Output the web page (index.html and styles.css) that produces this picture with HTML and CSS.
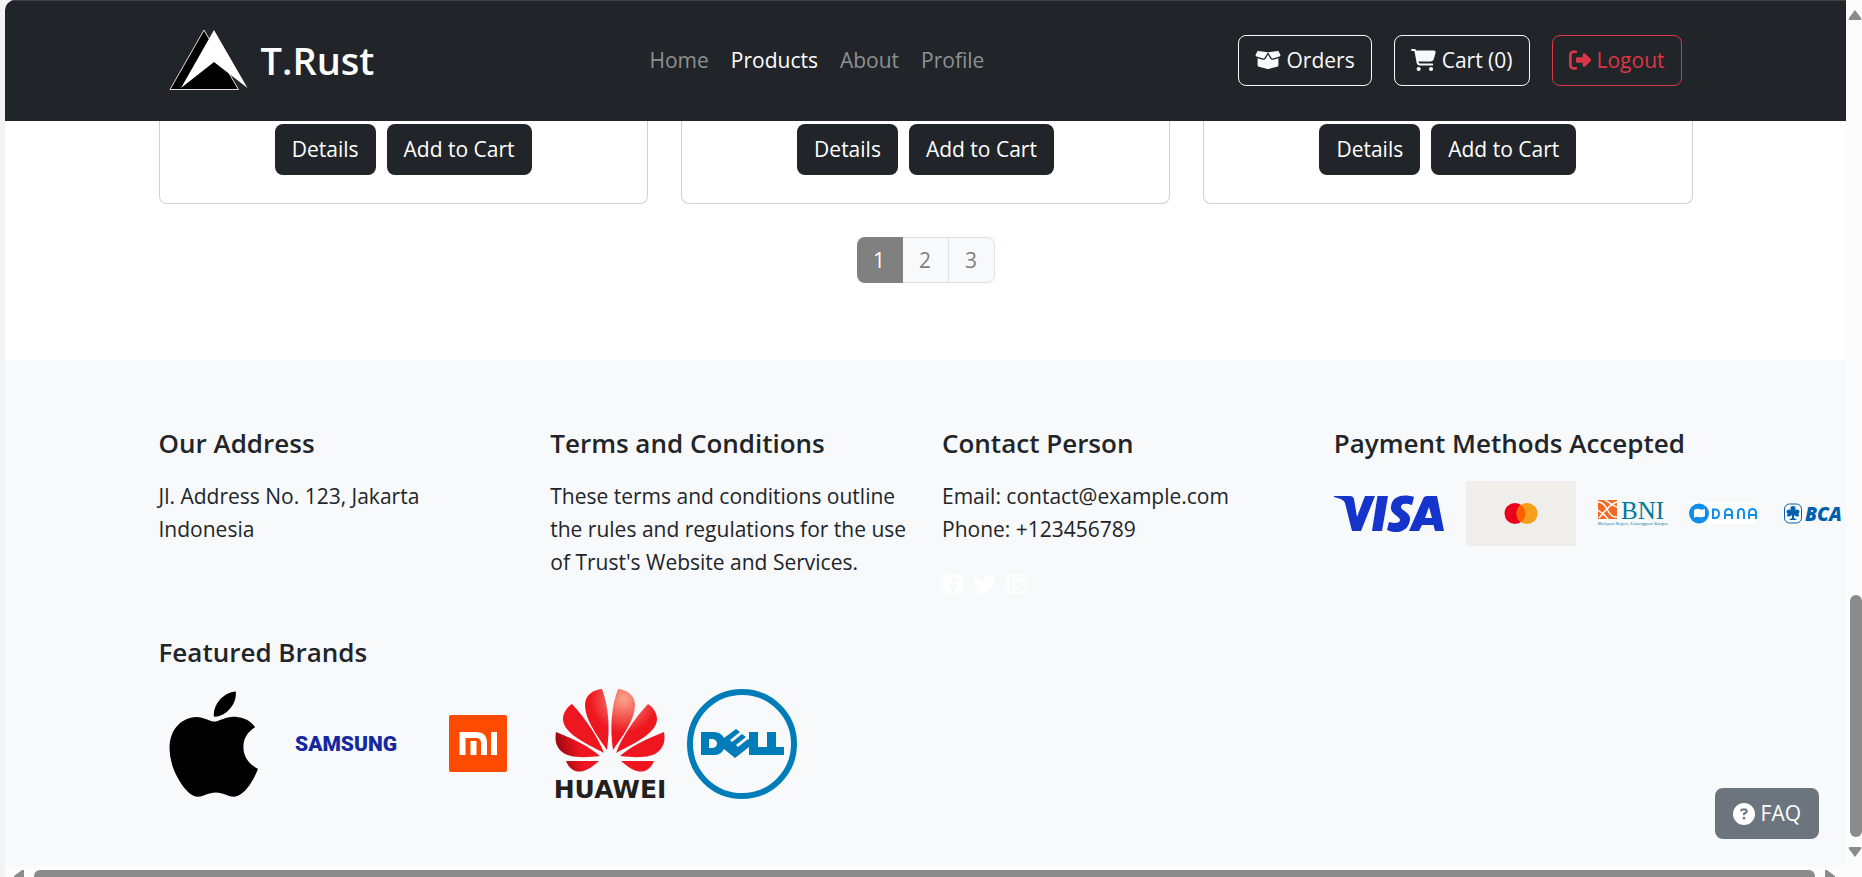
FILE: index.html
```html
<!DOCTYPE html>
<html lang="en">
<head>
<meta charset="utf-8">
<title>T.Rust - Products</title>
<link rel="stylesheet" href="styles.css">
</head>
<body>
<div class="window">
  <div class="page">
    <header class="navbar">
      <div class="container navbar-inner">
        <a class="brand" href="#">
          <svg class="brand-mark" viewBox="0 0 80 62" aria-hidden="true">
            <path d="M35 1 69.500 60.500H1Z" fill="#000" stroke="#ddd" stroke-width="1"/>
            <path d="M45 1 78.500 59 45 33 12 59Z" fill="#fff"/>
          </svg>
          <span>T.Rust</span>
        </a>
        <nav class="menu">
          <a href="#">Home</a>
          <a class="active" href="#">Products</a>
          <a href="#">About</a>
          <a href="#">Profile</a>
        </nav>
        <div class="actions">
          <button class="btn btn-outline"><svg class="icon icon-wide" viewBox="0 0 640 512"><path d="M58.900 42.100c3-6.100 9.600-9.600 16.300-8.700L320 64 564.800 33.400c6.700-.8 13.300 2.700 16.300 8.700l41.700 83.400c9 17.900-.6 39.600-19.800 45.100L439.600 217.300c-13.900 4-28.800-1.900-36.200-14.300L320 64 236.600 203c-7.400 12.400-22.300 18.300-36.200 14.300L37.100 170.600c-19.300-5.500-28.800-27.200-19.800-45.100L58.900 42.100zM321.100 128l54.900 91.400c14.900 24.800 44.600 36.600 72.500 28.600L576 211.600v167c0 22-15 41.200-36.400 46.600l-204.100 51c-10.200 2.600-20.900 2.600-31 0l-204.100-51C79 419.700 64 400.500 64 378.500v-167L191.600 248c27.800 8 57.600-3.800 72.500-28.600L318.900 128h2.200z"/></svg>Orders</button>
          <button class="btn btn-outline"><svg class="icon icon-cart" viewBox="0 0 576 512"><path d="M0 24C0 10.700 10.700 0 24 0H69.500c22 0 41.500 12.800 50.600 32h411c26.300 0 45.500 25 38.600 50.400l-41 152.300c-8.500 31.400-37 53.300-69.500 53.300H170.700l5.400 28.500c2.200 11.300 12.100 19.500 23.600 19.500H488c13.300 0 24 10.700 24 24s-10.700 24-24 24H199.700c-34.600 0-64.300-24.600-70.700-58.500L77.400 54.500c-.7-3.800-4-6.500-7.900-6.500H24C10.700 48 0 37.300 0 24zM128 464a48 48 0 1 1 96 0 48 48 0 1 1 -96 0zm336-48a48 48 0 1 1 0 96 48 48 0 1 1 0-96z"/></svg>Cart (0)</button>
          <button class="btn btn-danger"><svg class="icon" viewBox="0 0 512 512"><path d="M377.900 105.900L500.700 228.700c7.200 7.200 11.300 17.100 11.300 27.300s-4.100 20.100-11.300 27.300L377.900 406.100c-6.400 6.400-15 9.900-24 9.900c-18.700 0-33.900-15.200-33.900-33.900l0-62.100-128 0c-17.700 0-32-14.300-32-32l0-64c0-17.700 14.300-32 32-32l128 0 0-62.100c0-18.700 15.200-33.900 33.900-33.900c9 0 17.600 3.600 24 9.900zM160 96L96 96c-17.700 0-32 14.300-32 32l0 256c0 17.700 14.300 32 32 32l64 0c17.700 0 32 14.300 32 32s-14.300 32-32 32l-64 0c-53 0-96-43-96-96L0 128C0 75 43 32 96 32l64 0c17.700 0 32 14.300 32 32s-14.300 32-32 32z"/></svg>Logout</button>
        </div>
      </div>
    </header>

    <main class="container products">
      <div class="cards">
        <article class="card"><button class="btn btn-dark">Details</button><button class="btn btn-dark">Add to Cart</button></article>
        <article class="card"><button class="btn btn-dark">Details</button><button class="btn btn-dark">Add to Cart</button></article>
        <article class="card"><button class="btn btn-dark">Details</button><button class="btn btn-dark">Add to Cart</button></article>
      </div>
      <nav class="pagination" aria-label="Pages">
        <a class="current" href="#">1</a>
        <a href="#">2</a>
        <a href="#">3</a>
      </nav>
    </main>

    <footer class="footer">
      <div class="container">
        <div class="columns">
          <section>
            <h5>Our Address</h5>
            <p>Jl. Address No. 123, Jakarta<br>Indonesia</p>
          </section>
          <section>
            <h5>Terms and Conditions</h5>
            <p>These terms and conditions outline<br>the rules and regulations for the use<br>of Trust's Website and Services.</p>
          </section>
          <section>
            <h5>Contact Person</h5>
            <p>Email: contact@example.com<br>Phone: +123456789</p>
            <div class="social">
              <a href="#" aria-label="Facebook"><svg viewBox="0 0 512 512"><path fill="#fff" d="M504 256C504 119 393 8 256 8S8 119 8 256c0 123.780 90.690 226.380 209.250 245V327.690h-63V256h63v-54.640c0-62.150 37-96.480 93.670-96.480 27.140 0 55.520 4.840 55.520 4.840v61h-31.280c-30.800 0-40.410 19.120-40.410 38.730V256h68.780l-11 71.690h-57.780V501C413.310 482.380 504 379.780 504 256z"/></svg></a>
              <a href="#" aria-label="Twitter"><svg viewBox="0 0 512 512"><path fill="#fff" d="M459.370 151.716c.325 4.548.325 9.097.325 13.645 0 138.720-105.583 298.558-298.558 298.558-59.452 0-114.680-17.219-161.137-47.106 8.447.974 16.568 1.299 25.340 1.299 49.055 0 94.213-16.568 130.274-44.832-46.132-.975-84.792-31.188-98.112-72.772 6.498.974 12.995 1.624 19.818 1.624 9.421 0 18.843-1.300 27.614-3.573-48.081-9.747-84.143-51.980-84.143-102.985v-1.299c13.969 7.797 30.214 12.670 47.431 13.319-28.264-18.843-46.781-51.005-46.781-87.391 0-19.492 5.197-37.360 14.294-52.954 51.655 63.675 129.300 105.258 216.365 109.807-1.624-7.797-2.599-15.918-2.599-24.040 0-57.828 46.782-104.934 104.934-104.934 30.213 0 57.502 12.670 76.670 33.137 23.715-4.548 46.456-13.320 66.599-25.340-7.798 24.366-24.366 44.833-46.132 57.827 21.117-2.273 41.584-8.122 60.426-16.243-14.292 20.791-32.161 39.308-52.628 54.253z"/></svg></a>
              <a href="#" aria-label="Instagram"><svg viewBox="0 0 22 22"><rect x="2" y="2" width="18" height="18" rx="5" fill="none" stroke="#fff" stroke-width="2"/><circle cx="11" cy="11" r="4" fill="none" stroke="#fff" stroke-width="2"/><circle cx="16" cy="6" r="1.200" fill="#fff"/></svg></a>
            </div>
          </section>
          <section>
            <h5>Payment Methods Accepted</h5>
            <div class="payments">
              <svg width="110" height="66" viewBox="0 0 110 66" role="img" aria-label="Visa">
                <path fill="#1434cb" d="M0 16H16Q19 16 20 19L23 37 31 16H41L27 51H18L11 23Q10 19 0 17ZM43.500 16H54L48 51H38ZM80 17 78 25C72 23 67 23 67 27C67 31 77 32 76 40C74 53 61 54 53 50L55 42C61 44 66 43 66 40C66 36 56 34 57 27C58 15 71 14 80 17ZM93 16H103L110 51H101L99.500 45H88L85 51H75L89 19Q90 16 93 16ZM95 27 91 38H98Z" fill-rule="evenodd"/>
              </svg>
              <svg width="110" height="65" viewBox="0 0 110 65" role="img" aria-label="Mastercard">
                <rect width="110" height="65" fill="#f0eeeb"/>
                <circle cx="49" cy="32.500" r="10.500" fill="#eb001b"/><circle cx="61" cy="32.500" r="10.500" fill="#f79e1b"/>
                <path d="M55 23.900a10.500 10.500 0 0 1 0 17.200a10.500 10.500 0 0 1 0-17.200Z" fill="#ff5f00"/>
              </svg>
              <svg width="69" height="26" viewBox="0 0 69 26" role="img" aria-label="BNI">
                <rect width="19" height="19" fill="#f06a25"/>
                <path d="M0 2C5 2 7 5 9 9S14 18 19 17M1 18C5 13 7 11 9 9S14 3 19 2M7 0C12 3 15 6 19 7M0 10C3 13 7 14 10 19" stroke="#fff" stroke-width="1.500" fill="none"/>
                <text x="23" y="19" class="bni">BNI</text>
                <text x="0" y="25" class="tagline">Melayani Negeri, Kebanggaan Bangsa</text>
              </svg>
              <svg width="68" height="21" viewBox="0 0 68 21" role="img" aria-label="Dana">
                <rect width="68" height="21" fill="#fff"/>
                <circle cx="10" cy="10.500" r="10" fill="#118eea"/>
                <path d="M5 7Q8 5 10 6T16 6V13Q13 15 10 14T5 15Z" fill="#fff"/>
                <path d="M24 6.500V15H26Q30 15 30 10.700T26 6.500ZM36 16V10Q36 6 39.500 6T43 10V16M36 12H43M49 16V10Q49 6 52 6T55 10V16M60 16V10Q60 6 63.500 6T67 10V16M60 12H67" fill="none" stroke="#118eea" stroke-width="2"/>
              </svg>
              <svg width="65" height="21" viewBox="0 0 65 21" role="img" aria-label="BCA">
                <rect x="5.500" y="1" width="17" height="19" rx="5" fill="none" stroke="#0060af"/>
                <path d="M14 3C17 3 17 6 16 7C20 5 22 9 19 11C22 13 19 15 15 12L15 15 18 17H10L13 15 13 12C9 15 6 13 9 11C6 9 8 5 12 7C11 6 11 3 14 3Z" fill="#0060af"/>
                <text x="26" y="18" class="bca-text">BCA</text>
              </svg>
            </div>
          </section>
        </div>

        <section class="brands-section">
          <h5>Featured Brands</h5>
          <div class="brands">
            <svg width="110" height="110" viewBox="0 0 110 110" role="img" aria-label="Apple"><path transform="translate(9.600 -5) scale(.2348)" d="M318.700 268.700c-.2-36.700 16.400-64.400 50-84.800-18.800-26.900-47.200-41.700-84.700-44.600-35.500-2.800-74.300 20.700-88.500 20.700-15 0-49.400-19.700-76.400-19.700C63.300 141.200 4 184.800 4 273.500q0 39.300 14.400 81.200c12.800 36.700 59 126.700 107.200 125.200 25.200-.6 43-17.900 75.800-17.900 31.800 0 48.300 17.900 76.400 17.900 48.600-.7 90.400-82.500 102.600-119.300-65.200-30.700-61.700-90-61.700-91.900zm-56.600-164.200c27.300-32.400 24.800-61.900 24-72.500-24.100 1.400-52 16.400-67.900 34.900-17.500 19.800-27.800 44.300-25.600 71.900 26.100 2 49.900-11.400 69.500-34.300z"/></svg>
            <svg width="110" height="110" viewBox="0 0 110 110" role="img" aria-label="Samsung"><text x="55" y="62" text-anchor="middle" class="samsung">SAMSUNG</text></svg>
            <svg width="110" height="110" viewBox="0 0 110 110" role="img" aria-label="Xiaomi">
              <rect x="26" y="26" width="58" height="57" rx="2" fill="#ff4b00"/>
              <path d="M39.500 66V46H53Q61 46 61 54V66M50.500 52V66M71 43V66" fill="none" stroke="#fff" stroke-width="6"/>
            </svg>
            <svg width="110" height="110" viewBox="0 0 110 110" role="img" aria-label="Huawei">
              <defs><radialGradient id="petal" gradientUnits="userSpaceOnUse" cx="69" cy="10" r="34"><stop offset="0" stop-color="#faa48c"/><stop offset="1" stop-color="#ee161f"/></radialGradient>
              <linearGradient id="dark" x1="0" y1="0.600" x2="1" y2="0.400"><stop offset="0" stop-color="#8d060d"/><stop offset=".55" stop-color="#ee161f"/></linearGradient></defs>
              <g fill="url(#petal)">
                <path d="M47 0C54 18 55 40 52 61C41 45 30 30 30 16C30 6 38 1 47 0Z"/>
                <path d="M63 0C56 18 55 40 58 61C69 45 80 30 80 16C80 6 72 1 63 0Z"/>
                <path d="M17 15C31 30 43 48 49 64C30 54 8 44 8 30C8 24 12 18 17 15Z"/>
                <path d="M93 15C79 30 67 48 61 64C80 54 102 44 102 30C102 24 98 18 93 15Z"/>
              </g>
              <path fill="url(#dark)" d="M1 43C19 50 35 58 45 67C28 69 13 69 6 62C0 56 0 49 1 43ZM11 72H44C35 80 29 83 23 82.500C17 82 13 77 11 72Z"/>
              <path fill="#ee161f" d="M109 43C91 50 75 58 65 67C82 69 97 69 104 62C110 56 110 49 109 43ZM99 72H66C75 80 81 83 87 82.500C93 82 97 77 99 72Z"/>
              <text x="55" y="109" text-anchor="middle" class="huawei">HUAWEI</text>
            </svg>
            <svg width="110" height="110" viewBox="0 0 110 110" role="img" aria-label="Dell">
              <circle cx="55" cy="55" r="52" fill="none" stroke="#007db8" stroke-width="6"/>
              <path fill="#007db8" fill-rule="evenodd" d="M14 43H27Q34 43 37 49L49 40 53 43 43 51 45 53 55 45 59 48 49 56 51 58 61 50 62 51V43H71V58H80V43H89V58H97V66H62V58L48 69 37 60Q34 66 27 66H14ZM22 50V59H26Q30 58 30 54.500T26 50Z"/>
            </svg>
          </div>
        </section>
      </div>
    </footer>
    <button class="btn faq"><svg class="icon" viewBox="0 0 512 512"><path d="M256 512A256 256 0 1 0 256 0a256 256 0 1 0 0 512zM169.800 165.300c7.900-22.300 29.100-37.300 52.800-37.300h58.300c34.900 0 63.100 28.300 63.100 63.100c0 22.600-12.100 43.500-31.700 54.800L280 264.400c-.2 13-10.900 23.600-24 23.600c-13.300 0-24-10.700-24-24V250.500c0-8.600 4.600-16.500 12.100-20.800l44.300-25.400c4.700-2.700 7.600-7.700 7.600-13.100c0-8.400-6.800-15.100-15.100-15.100H222.600c-3.400 0-6.400 2.100-7.500 5.300l-.4 1.200c-4.400 12.500-18.200 19-30.600 14.600s-19-18.200-14.600-30.600l.4-1.200zM224 352a32 32 0 1 1 64 0 32 32 0 1 1 -64 0z"/></svg>FAQ</button>
  </div>
  <div class="scroll-y" aria-hidden="true">
    <svg width="14" height="10" viewBox="0 0 14 10"><path d="M7 0 13 8Q14 10 12 10H2Q0 10 1 8Z"/></svg>
    <div class="track-y"><div class="thumb-y"></div></div>
    <svg width="14" height="10" viewBox="0 0 14 10"><path d="M7 10 13 2Q14 0 12 0H2Q0 0 1 2Z"/></svg>
  </div>
  <div class="scroll-x" aria-hidden="true">
    <svg width="10" height="7" viewBox="0 0 10 7"><path d="M0 6 8 0Q9 0 10 0V7H0Z"/></svg>
    <div class="thumb-x"></div>
    <svg width="10" height="7" viewBox="0 0 10 7"><path d="M10 6 2 0Q1 0 0 0V7H10Z"/></svg>
  </div>
</div>
</body>
</html>
```
FILE: styles.css
```css
* { box-sizing: border-box; }

body {
  margin: 0;
  background: #f3f3f3;
  color: #212529;
  font-family: "Open Sans", "Noto Sans", sans-serif;
  font-size: 21px;
  line-height: 33px;
}

a { color: inherit; text-decoration: none; }
svg { display: block; flex: none; overflow: visible; }

.window {
  display: grid;
  grid-template-columns: 1fr 16px;
  grid-template-rows: 1fr 11px;
  min-height: 100vh;
  margin-left: 5px;
  border-radius: 10px 0 0 0;
  overflow: hidden;
  background: #fcfcfc;
}

.page {
  position: relative;
  display: flex;
  flex-direction: column;
  min-width: 0;
  overflow: hidden;
  background: #fff;
}

.container {
  width: 100%;
  max-width: 1568px;
  margin: 0 auto;
  padding: 0 17px;
}

.navbar {
  display: flex;
  height: 121px;
  padding-bottom: 2px;
  border-top: 1px solid #3c4043;
  background: #212529;
}

.navbar-inner {
  display: flex;
  align-items: center;
  justify-content: space-between;
}

.brand {
  display: flex;
  align-items: center;
  gap: 12px;
  padding: 0 22px 0 10px;
  color: #fff;
  font-size: 38px;
  font-weight: 600;
  line-height: 46px;
}

.brand-mark { width: 80px; height: 62px; }

.menu { display: flex; gap: 22px; color: #8d9092; }
.menu .active { color: #fff; }

.actions {
  display: flex;
  gap: 22px;
  padding-right: 11px;
}

.btn {
  display: flex;
  align-items: center;
  gap: 6px;
  padding: 8px 16px;
  border: 1px solid transparent;
  border-radius: 8px;
  color: #fff;
  background: transparent;
  font: inherit;
  white-space: nowrap;
}

.icon { width: 22px; height: 22px; fill: currentColor; }
.icon-wide { width: 26px; }
.icon-cart { width: 25px; }

.btn-outline { border-color: #f8f9fa; color: #f8f9fa; }
.btn-danger { border-color: #dc3545; color: #dc3545; }
.btn-dark { background: #212529; }

.cards {
  display: grid;
  grid-template-columns: repeat(3, 1fr);
  gap: 33px;
}

.card {
  display: flex;
  justify-content: center;
  gap: 11px;
  padding: 3px 16px 28px;
  border: 1px solid #d0d1d2;
  border-top: 0;
  border-radius: 0 0 8px 8px;
}

.pagination {
  display: flex;
  justify-content: center;
  padding: 33px 0 77px;
  color: #808080;
}

.pagination a {
  width: 46px;
  padding: 6px 0 5px;
  border: 1px solid #dee2e6;
  border-left: 0;
  background: #f8f9fb;
  text-align: center;
}

.pagination .current {
  border-color: #808080;
  border-radius: 8px 0 0 8px;
  background: #808080;
  color: #fff;
}

.pagination a:last-child { border-radius: 0 8px 8px 0; }

.footer {
  flex: 1;
  padding: 66px 0 44px;
  background: #f8f9fb;
}

.columns {
  display: grid;
  grid-template-columns: repeat(4, minmax(0, 1fr));
  column-gap: 33px;
  white-space: nowrap;
}

h5 {
  margin: 0 0 20px;
  font-size: 26px;
  font-weight: 600;
  line-height: 34px;
}

p { margin: 1px 0 27px; }

.social { display: flex; gap: 10px; }
.social svg { width: 22px; height: 22px; }

.payments {
  display: flex;
  align-items: center;
  gap: 22px;
}

.brands-section { margin-top: 29px; }
.brands { display: flex; gap: 22px; }

.bni { font: 25px "Liberation Serif", serif; fill: #007a96; }
.tagline { font: 4px "Open Sans", sans-serif; fill: #007a96; }
.bca-text { font: italic 800 19px "Open Sans", sans-serif; fill: #0060af; }
.samsung { font: 900 21px Roboto, sans-serif; fill: #1428a0; }
.huawei { font: bold 25px "DejaVu Sans", sans-serif; fill: #231f20; }

.faq {
  position: absolute;
  right: 27px;
  bottom: 27px;
  padding: 8px 17px;
  background: #6c757d;
}

.scroll-y {
  display: flex;
  flex-direction: column;
  align-items: flex-end;
  padding: 10px 0 9px;
}

.track-y {
  display: flex;
  flex: 1;
  flex-direction: column;
  justify-content: flex-end;
  padding: 10px 0;
}

.thumb-y {
  width: 12px;
  height: 30%;
  border-radius: 6px;
  background: #8b8b8b;
}

.scroll-y svg, .scroll-x svg { fill: #8b8b8b; }

.scroll-x {
  display: flex;
  gap: 10px;
  padding: 4px 11px 0 9px;
}

.thumb-x {
  flex: 1;
  border-radius: 6px 6px 0 0;
  background: #8b8b8b;
}
```
